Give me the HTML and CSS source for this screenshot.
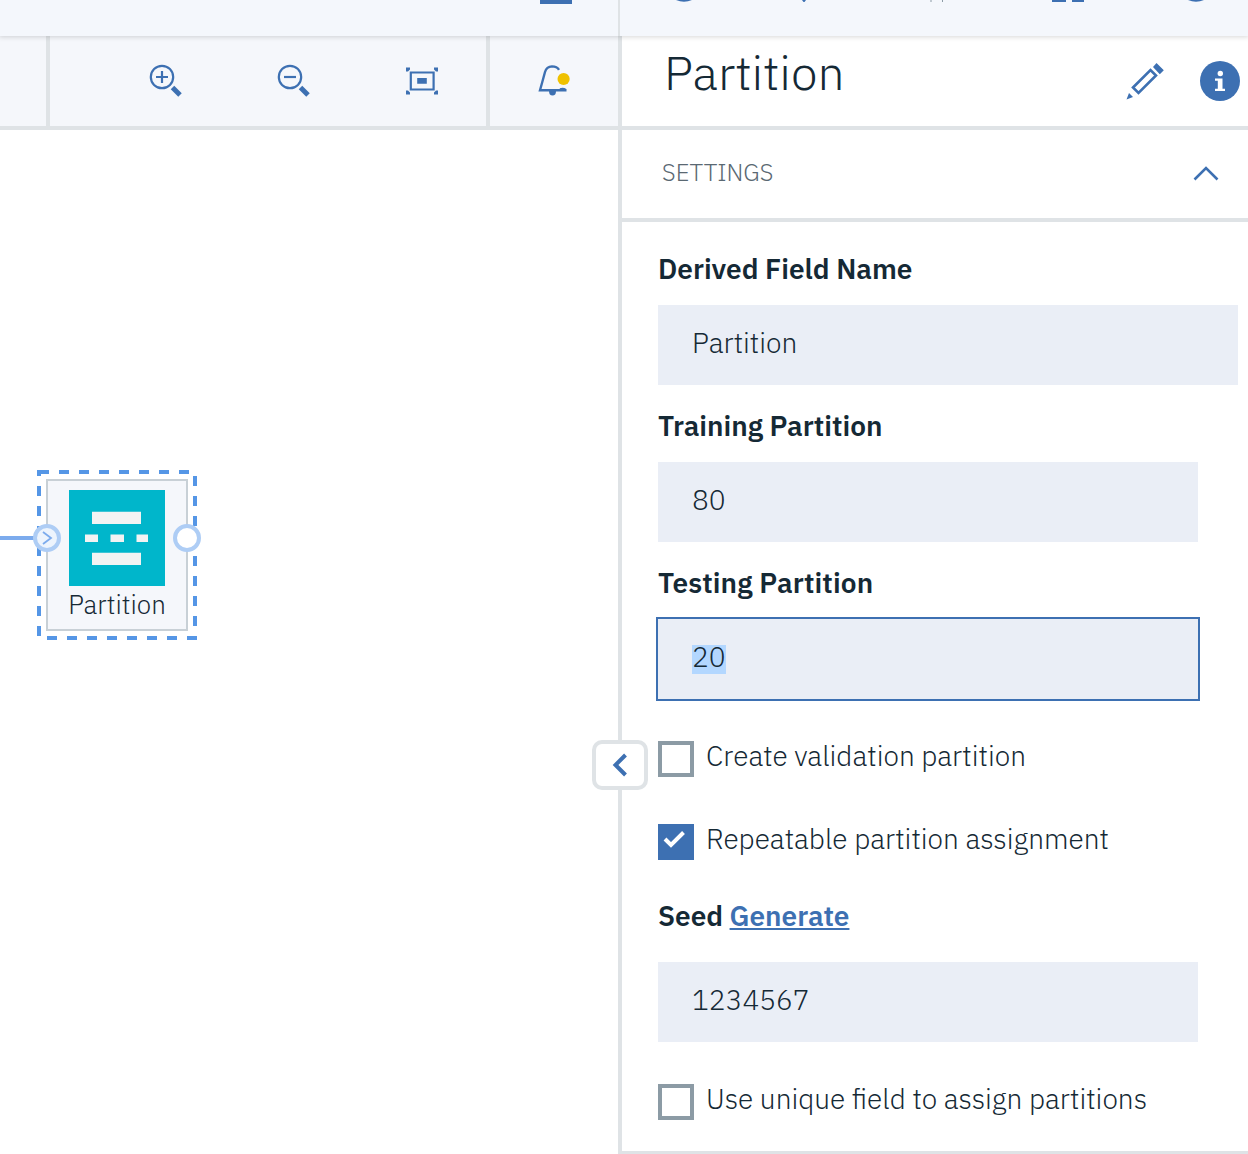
FILE: index.html
```html
<!DOCTYPE html>
<html lang="en">
<head>
<meta charset="utf-8">
<title>Partition</title>
<link rel="stylesheet" href="styles.css">
</head>
<body>
<header class="topbar">
  <svg class="topbar-icons" width="1248" height="36" viewBox="0 0 1248 36" aria-hidden="true">
    <path class="blue" d="M540 0h32v4h-32zM1052 0h14v2h-14zM1072 0h12v2h-12zM676 0q8 3.600 16 0zM1188 0q8 3.600 16 0zM802 0h4l-1.500 2h-1z"/>
    <path class="rule" d="M618 0h2v36h-2z"/>
    <path class="grey" d="M930.500 0h1v2h-1zM942 0h1v2h-1z"/>
  </svg>
</header>
<div class="workspace">
  <main class="flow">
    <div class="toolbar">
      <div class="tool-spacer"></div>
      <div class="tool-group zoom-tools">
        <svg width="34" height="34" viewBox="0 0 34 34" class="line-icon"><circle cx="13" cy="13" r="11.200"/><path d="M13 7v12M7 13h12"/><path class="thick" d="M23.500 23.500l7.500 7.500"/></svg>
        <svg width="34" height="34" viewBox="0 0 34 34" class="line-icon"><circle cx="13" cy="13" r="11.200"/><path d="M7 13h12"/><path class="thick" d="M23.500 23.500l7.500 7.500"/></svg>
        <svg width="34" height="34" viewBox="0 0 34 34" class="fit"><path d="M1 3.500h4v2l-2 2H1zM33 3.500h-4v2l2 2h2zM1 30.500h4v-2l-2-2H1zM33 30.500h-4v-2l2-2h2zM12.200 14h9.600v5.700h-9.600z"/><path class="outline" d="M5.800 8.500h22.800v17H5.800z"/></svg>
      </div>
      <div class="tool-group alerts">
        <svg width="34" height="34" viewBox="0 0 34 34" class="line-icon"><path d="M22 5.800Q20 2.400 15 2.400Q9.500 2.700 8 8Q6 15.500 3 26.300H29.500"/><path d="M23 25.300Q26.500 24.200 28.500 26"/><path class="blue bare" d="M12 27h7a3.500 4.500 0 0 1-7 0z"/><circle class="badge bare" cx="26.600" cy="15" r="6.100"/></svg>
      </div>
    </div>
    <div class="canvas">
      <svg class="node" width="210" height="190" viewBox="0 460 210 190">
        <rect x="39" y="472" width="156" height="166" fill="none" stroke="#5596e6" stroke-width="4" stroke-dasharray="10"/>
        <rect x="47" y="480" width="140" height="150" fill="#f5f7fb" stroke="#c8d0d6" stroke-width="2"/>
        <path d="M0 538h35" stroke="#7cabed" stroke-width="4"/>
        <rect x="69" y="490" width="96" height="96" fill="#00b6cb"/>
        <path fill="#f2f3f3" d="M92 511.700h49V524H92zM92 552.700h49V565H92zM85 534.500h13v7.500H85zM110.500 534.500H124v7.500h-13.500zM136.500 534.500H148v7.500h-11.500z"/>
        <circle cx="47" cy="538" r="12" fill="#edf4fd" stroke="#aecdf5" stroke-width="4"/>
        <path d="M43 532l8 6-8 6" fill="none" stroke="#7cabed" stroke-width="1.800"/>
        <circle cx="187" cy="538" r="12" fill="#fff" stroke="#aecdf5" stroke-width="4"/>
        <text x="117" y="614" text-anchor="middle">Partition</text>
      </svg>
    </div>
    <button class="collapse" aria-label="Collapse panel"><svg width="20" height="28" viewBox="0 0 20 28"><path d="M15.500 4L5.500 14l10 10"/></svg></button>
  </main>
  <aside class="panel">
    <div class="panel-head">
      <h1>Partition</h1>
      <svg class="pencil" width="40" height="40" viewBox="0 0 40 40"><path class="outline" d="M8 26.500L25.500 9l5.500 5.500L13.500 32z"/><path d="M28 6L31.500 2l7.300 7.200-4 4zM1.500 38.500l2.500-6.500 4 4z"/></svg>
      <svg class="info" width="40" height="40" viewBox="0 0 40 40"><circle cx="20" cy="20" r="20"/><path fill="#fff" d="M15 17.500h7.500v10.200H25V30H15v-2.300h2.800v-7.900H15z"/><circle cx="20.300" cy="12.500" r="2.700" fill="#fff"/></svg>
    </div>
    <div class="section-head">
      <span>SETTINGS</span>
      <svg width="26" height="16" viewBox="0 0 26 16"><path d="M1.500 14.500L13 3 24.500 14.500"/></svg>
    </div>
    <form class="fields">
      <div class="label">Derived Field Name</div>
      <div class="input wide">Partition</div>
      <div class="label">Training Partition</div>
      <div class="input">80</div>
      <div class="label testing">Testing Partition</div>
      <div class="input focused"><span class="selected">20</span></div>
      <div class="check first"><i class="box"></i><span>Create validation partition</span></div>
      <div class="check second"><i class="box checked"><svg width="36" height="36" viewBox="0 0 36 36"><path d="M7 15l6 6L25.500 8.500"/></svg></i><span>Repeatable partition assignment</span></div>
      <div class="label seed"><span>Seed</span><a>Generate</a></div>
      <div class="input">1234567</div>
      <div class="check third"><i class="box"></i><span>Use unique field to assign partitions</span></div>
    </form>
  </aside>
</div>
</body>
</html>
```
FILE: styles.css
```css
* { box-sizing: border-box; }
body {
  margin: 0;
  width: 1248px;
  height: 1154px;
  overflow: hidden;
  background: #fff;
  color: #152935;
  font-family: "IBM Plex Sans", "Open Sans", sans-serif;
  font-size: 28px;
  font-weight: 300;
}
svg { display: block; flex: none; }
span, a { white-space: nowrap; }
.blue { fill: #3d70b2; }
.rule { fill: #dfe3e6; }
.grey { fill: #8c9ba5; }

.topbar { position: relative; z-index: 2; height: 36px; background: #f4f7fc; box-shadow: 0 0 5px 1px rgba(0,0,0,.16); }
.workspace { display: flex; height: 1118px; }
.flow { position: relative; width: 622px; border-right: 4px solid #dfe3e6; }
.toolbar { display: flex; height: 94px; background: #f5f7fb; border-bottom: 4px solid #dfe3e6; }
.tool-spacer { width: 46px; }
.tool-group { display: flex; border-left: 4px solid #dfe3e6; }
.zoom-tools { width: 440px; padding: 28px 0 0 99px; gap: 94px; }
.zoom-tools .fit { fill: #3d70b2; }
.alerts { padding: 28px 0 0 47px; }
.line-icon { fill: none; stroke: #3d70b2; stroke-width: 2.2; }
.line-icon .thick { stroke-width: 5; }
.line-icon .bare { stroke: none; }
.line-icon .blue { fill: #3d70b2; }
.line-icon .badge { fill: #efc100; }
.outline { fill: none; stroke: #3d70b2; stroke-width: 2.2; }
.canvas { padding-top: 330px; }
.node text { font-size: 26px; fill: #152935; }
.collapse {
  position: absolute; left: 592px; top: 704px; width: 56px; height: 50px;
  display: flex; align-items: center; justify-content: center; padding: 0 1px 0 0;
  background: #fff; border: 4px solid #dfe3e6; border-radius: 10px;
}
.collapse path { fill: none; stroke: #3d70b2; stroke-width: 4; }
.alerts .line-icon { stroke-width: 2.4; }

.panel { width: 626px; display: flex; flex-direction: column; }
.panel-head { display: flex; height: 94px; padding-left: 42px; border-bottom: 4px solid #dfe3e6; }
.panel-head h1 { width: 461px; margin: 0; font-size: 48px; font-weight: 300; line-height: 73px; }
.pencil { margin-top: 25px; }
.pencil .outline { stroke-width: 2.6; }
.pencil, .info { fill: #3d70b2; }
.info { margin: 25px 0 0 35px; }
.section-head {
  display: flex; justify-content: space-between; height: 92px; padding: 0 29px 0 40px;
  border-bottom: 4px solid #dfe3e6; color: #5a6872; font-size: 24px; line-height: 85px;
}
.section-head svg { margin-top: 35px; fill: none; stroke: #3d70b2; stroke-width: 2.6; }
.fields { height: 932px; padding: 27px 0 0 36px; border-bottom: 3px solid #dfe3e6; }
.label { height: 40px; margin-bottom: 16px; line-height: 40px; font-weight: 600; }
.label.testing { letter-spacing: .12px; }
.input { width: 540px; height: 80px; margin-bottom: 21px; padding-left: 34px; line-height: 76px; background: #eaeef6; }
.input.wide { width: 580px; }
.input.focused { outline: 2px solid #3d70b2; }
.selected { display: inline-block; height: 29px; line-height: 24px; background: #b3d7ff; }
.check { display: flex; gap: 12px; height: 36px; line-height: 30px; }
.box { width: 36px; height: 36px; border: 4px solid #8c9ba5; }
.box.checked { border: 0; background: #3d70b2; }
.box path { fill: none; stroke: #fff; stroke-width: 4; }
.check.first { margin-top: 42px; }
.check.second { margin: 47px 0 36px; }
.check.third { margin-top: 42px; }
.label.seed { display: flex; gap: 6.4px; margin-bottom: 26px; }
.seed a { color: #3d70b2; text-decoration: underline; text-decoration-thickness: 2px; text-underline-offset: 2px; }
```
